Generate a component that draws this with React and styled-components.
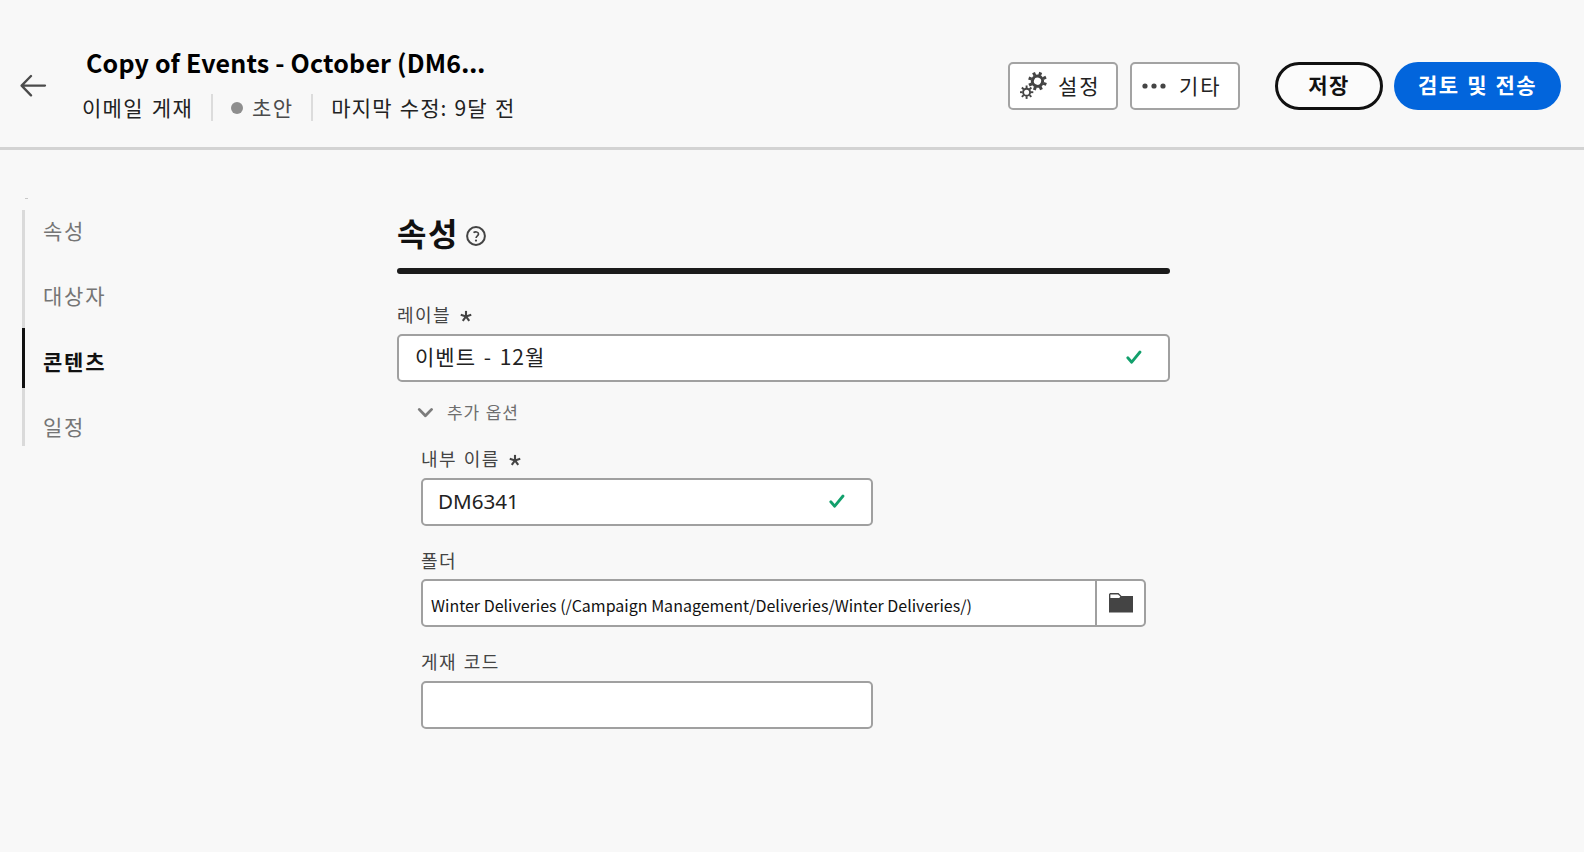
import React from "react";
import styled, { createGlobalStyle } from "styled-components";

const Global = createGlobalStyle`
  *{box-sizing:border-box}
  html,body{margin:0;padding:0;background:#f8f8f8}
  body{min-height:852px;overflow:hidden;font-family:"Noto Sans CJK KR",sans-serif;color:#222}
  button{font:inherit;color:inherit;margin:0;padding:0;cursor:pointer}
  svg{display:block;flex:none}
`;

const Header = styled.header`
  display: flex;
  align-items: flex-start;
  height: 150px;
  padding: 0 23px 0 20px;
  border-bottom: 3px solid #d3d3d3;
`;
const Back = styled.button`
  width: 27px;
  height: 24px;
  margin-top: 74px;
  border: 0;
  background: none;
`;
const Titles = styled.div`
  flex: 1;
  margin-left: 35px;
  padding-top: 45px;
`;
const Title = styled.h1`
  margin: 0 0 0 4px;
  font-size: 25px;
  line-height: 34px;
  height: 34px;
  letter-spacing: 0.18px;
  font-weight: 700;
  color: #000;
  white-space: nowrap;
`;
const Ellipsis = styled.span`
  font-family: "Open Sans", sans-serif;
  font-size: 28px;
`;
const Meta = styled.div`
  display: flex;
  align-items: center;
  height: 27px;
  margin-top: 15px;
  font-size: 21px;
  line-height: 27px;
  letter-spacing: 1.3px;
  word-spacing: 2px;
  white-space: nowrap;
`;
const Separator = styled.i`
  width: 2px;
  height: 27px;
  background: #dcdcdc;
  margin: 0 18px;
`;
const Dot = styled.i`
  width: 12px;
  height: 12px;
  border-radius: 50%;
  background: #8e8e8e;
  margin-right: 9px;
`;
const Draft = styled.span`
  color: #4b4b4b;
`;
const Modified = styled.span`
  letter-spacing: 1.1px;
  word-spacing: 1.3px;
`;
const Actions = styled.div`
  display: flex;
  padding-top: 62px;
`;
const Tool = styled.button`
  display: flex;
  align-items: center;
  gap: ${(p) => p.$gap}px;
  width: 110px;
  height: 48px;
  padding: 0 0 2px 10px;
  margin-right: 12px;
  border: 2px solid #a3a3a3;
  border-radius: 5px;
  background: #fff;
  font-size: 21px;
  line-height: 30px;
  letter-spacing: 2px;
`;
const Pill = styled.button`
  width: ${(p) => (p.$primary ? 167 : 108)}px;
  height: 48px;
  padding-bottom: 4px;
  margin-left: ${(p) => (p.$primary ? 11 : 23)}px;
  border: ${(p) => (p.$primary ? "0" : "3px solid #111")};
  border-radius: 24px;
  background: ${(p) => (p.$primary ? "#0265dc" : "#fbfbfb")};
  color: ${(p) => (p.$primary ? "#fff" : "#111")};
  font-size: 21px;
  font-weight: 700;
  line-height: 30px;
  letter-spacing: 1.4px;
  word-spacing: 1.5px;
`;

const Body = styled.main`
  display: flex;
`;
const Nav = styled.nav`
  width: 397px;
  padding: 48px 0 0 22px;
`;
const Tick = styled.i`
  display: block;
  width: 3px;
  height: 1px;
  margin: 0 0 11px 3px;
  background: #c8c8c8;
`;
const Steps = styled.div`
  display: flex;
  gap: 18px;
`;
const Rail = styled.div`
  display: flex;
  flex-direction: column;
  width: 3px;
`;
const Segment = styled.i`
  height: ${(p) => p.$h}px;
  background: ${(p) => (p.$on ? "#111" : "#dadada")};
`;
const StepList = styled.div`
  display: grid;
  grid-auto-rows: 32px;
  row-gap: 33.3px;
  padding-top: 4px;
  height: 236px;
`;
const Step = styled.a`
  font-size: 21px;
  line-height: 32px;
  letter-spacing: 1.8px;
  color: ${(p) => (p.$on ? "#111" : "#757575")};
  font-weight: ${(p) => (p.$on ? 700 : 400)};
`;

const Form = styled.section`
  width: 773px;
  padding-top: 58px;
`;
const Heading = styled.h2`
  display: flex;
  align-items: center;
  gap: 7px;
  height: 56px;
  margin: 0;
  font-size: 32px;
  line-height: 48px;
  letter-spacing: 1.5px;
  color: #111;
`;
const HeadingText = styled.span`
  padding-bottom: 8px;
`;
const Rule = styled.div`
  height: 6px;
  margin: 4px 0 28px;
  border-radius: 3px;
  background: #1b1b1b;
`;
const Label = styled.label`
  display: flex;
  gap: 9px;
  height: 24px;
  margin: ${(p) => p.$top || 0}px 0 ${(p) => p.$gap}px;
  font-size: 18px;
  line-height: 24px;
  letter-spacing: 1.5px;
  word-spacing: 1px;
  color: #444;
  white-space: nowrap;
`;
const Field = styled.div`
  display: flex;
  align-items: center;
  justify-content: space-between;
  width: ${(p) => p.$w};
  height: 48px;
  padding: 0 26px 2px 16px;
  border: 2px solid #a0a0a0;
  border-radius: 5px;
  background: #fff;
`;
const Value = styled.span`
  padding-bottom: 2px;
  font-size: 21px;
  line-height: 30px;
  letter-spacing: 1px;
  word-spacing: 2px;
`;
const Code = styled.span`
  margin-left: -1px;
  font-family: "Noto Sans", sans-serif;
  font-size: 20.6px;
`;
const PathField = styled(Field)`
  padding: 0;
`;
const Path = styled.span`
  padding: 4px 0 0 8px;
  font-size: 16px;
  line-height: 24px;
  color: #111;
`;
const Browse = styled.button`
  display: flex;
  align-items: center;
  justify-content: center;
  width: 49px;
  height: 44px;
  border: 0;
  border-left: 2px solid #a0a0a0;
  background: none;
`;
const More = styled.div`
  display: flex;
  align-items: center;
  gap: 13px;
  height: 26px;
  margin-top: 17px;
  padding-left: 20px;
  font-size: 17px;
  line-height: 26px;
  letter-spacing: 0.9px;
  word-spacing: 1px;
  color: #6e6e6e;
`;
const Sub = styled.div`
  padding: 21px 0 0 24px;
`;

const Arrow = () => (
  <svg width="27" height="24" fill="none" stroke="#4b4b4b" strokeWidth="2.3" strokeLinecap="round" strokeLinejoin="round">
    <path d="M25 11.6H1.6M11 2 1.6 11.6 11 21.4" />
  </svg>
);
const Gear = ({ x, y, r, ring, w, turn }) => (
  <g transform={`translate(${x} ${y}) rotate(${turn})`} stroke="#444" strokeWidth={w} fill="none">
    <circle r={ring} />
    {[0, 45, 90, 135, 180, 225, 270, 315].map((a) => (
      <path key={a} d={`M0 ${-ring - w / 3}V${-r}`} transform={`rotate(${a})`} />
    ))}
  </g>
);
const Gears = () => (
  <svg width="28" height="28">
    <Gear x={17.5} y={10.2} r={9.4} ring={5.1} w={3} turn={20} />
    <Gear x={6.6} y={21.2} r={6.7} ring={3.5} w={1.9} turn={0} />
  </svg>
);
const Dots = () => (
  <svg width="24" height="8" fill="#444">
    <circle cx="3" cy="5" r="2.6" />
    <circle cx="12" cy="5" r="2.6" />
    <circle cx="21" cy="5" r="2.6" />
  </svg>
);
const Help = () => (
  <svg width="20" height="20" viewBox="0 0 20 20" fill="none" stroke="#444" strokeWidth="2">
    <circle cx="10" cy="10" r="8.9" />
    <path d="M7.5 6.7c1.6-1.3 5-1 5 1.2 0 1.9-2.4 1.9-2.4 4.1" strokeWidth="1.7" />
    <circle cx="10" cy="14.6" r="1.1" fill="#444" stroke="none" />
  </svg>
);
const Asterisk = () => (
  <svg width="12" height="24" stroke="#444" strokeWidth="2.1">
    {[0, 72, 144, 216, 288].map((a) => (
      <path key={a} d="M0 0V-5.5" transform={`translate(6 14.4) rotate(${a})`} />
    ))}
  </svg>
);
const Check = () => (
  <svg width="16" height="15" fill="none" stroke="#12a06c" strokeWidth="2.8" strokeLinecap="round" strokeLinejoin="round">
    <path d="M1.8 7.8 5.7 12.2 14 2" />
  </svg>
);
const Chevron = () => (
  <svg width="17" height="11" fill="none" stroke="#7c7c7c" strokeWidth="2.8" strokeLinecap="round" strokeLinejoin="round">
    <path d="M2.2 2.4 8.4 8.8 14.6 2.4" />
  </svg>
);
const Folder = () => (
  <svg width="24" height="20">
    <path d="M0 19.5V1.2L1 0H9.5L12.5 3H24V19.5Z" fill="#444" />
    <path d="M1.4 1.4H9L11.3 3.6 10.3 5H1.4Z" fill="#fff" />
  </svg>
);

export default function App() {
  return (
    <>
      <Global />
      <Header>
        <Back aria-label="뒤로"><Arrow /></Back>
        <Titles>
          <Title>Copy of Events - October (DM6<Ellipsis>…</Ellipsis></Title>
          <Meta>
            <span>이메일 게재</span>
            <Separator />
            <Dot />
            <Draft>초안</Draft>
            <Separator />
            <Modified>마지막 수정: 9달 전</Modified>
          </Meta>
        </Titles>
        <Actions>
          <Tool $gap={10}><Gears />설정</Tool>
          <Tool $gap={13}><Dots />기타</Tool>
          <Pill>저장</Pill>
          <Pill $primary>검토 및 전송</Pill>
        </Actions>
      </Header>
      <Body>
        <Nav>
          <Tick />
          <Steps>
            <Rail><Segment $h={118} /><Segment $h={60} $on /><Segment $h={58} /></Rail>
            <StepList>
              <Step>속성</Step>
              <Step>대상자</Step>
              <Step $on>콘텐츠</Step>
              <Step>일정</Step>
            </StepList>
          </Steps>
        </Nav>
        <Form>
          <Heading><HeadingText>속성</HeadingText><Help /></Heading>
          <Rule />
          <Label $gap={8}>레이블<Asterisk /></Label>
          <Field $w="100%"><Value>이벤트 - 12월</Value><Check /></Field>
          <More><Chevron /><span>추가 옵션</span></More>
          <Sub>
            <Label $gap={8}>내부 이름<Asterisk /></Label>
            <Field $w="452px"><Code>DM6341</Code><Check /></Field>
            <Label $top={22} $gap={7}>폴더</Label>
            <PathField $w="725px">
              <Path>Winter Deliveries (/Campaign Management/Deliveries/Winter Deliveries/)</Path>
              <Browse aria-label="폴더"><Folder /></Browse>
            </PathField>
            <Label $top={22} $gap={8}>게재 코드</Label>
            <Field $w="452px" />
          </Sub>
        </Form>
      </Body>
    </>
  );
}
